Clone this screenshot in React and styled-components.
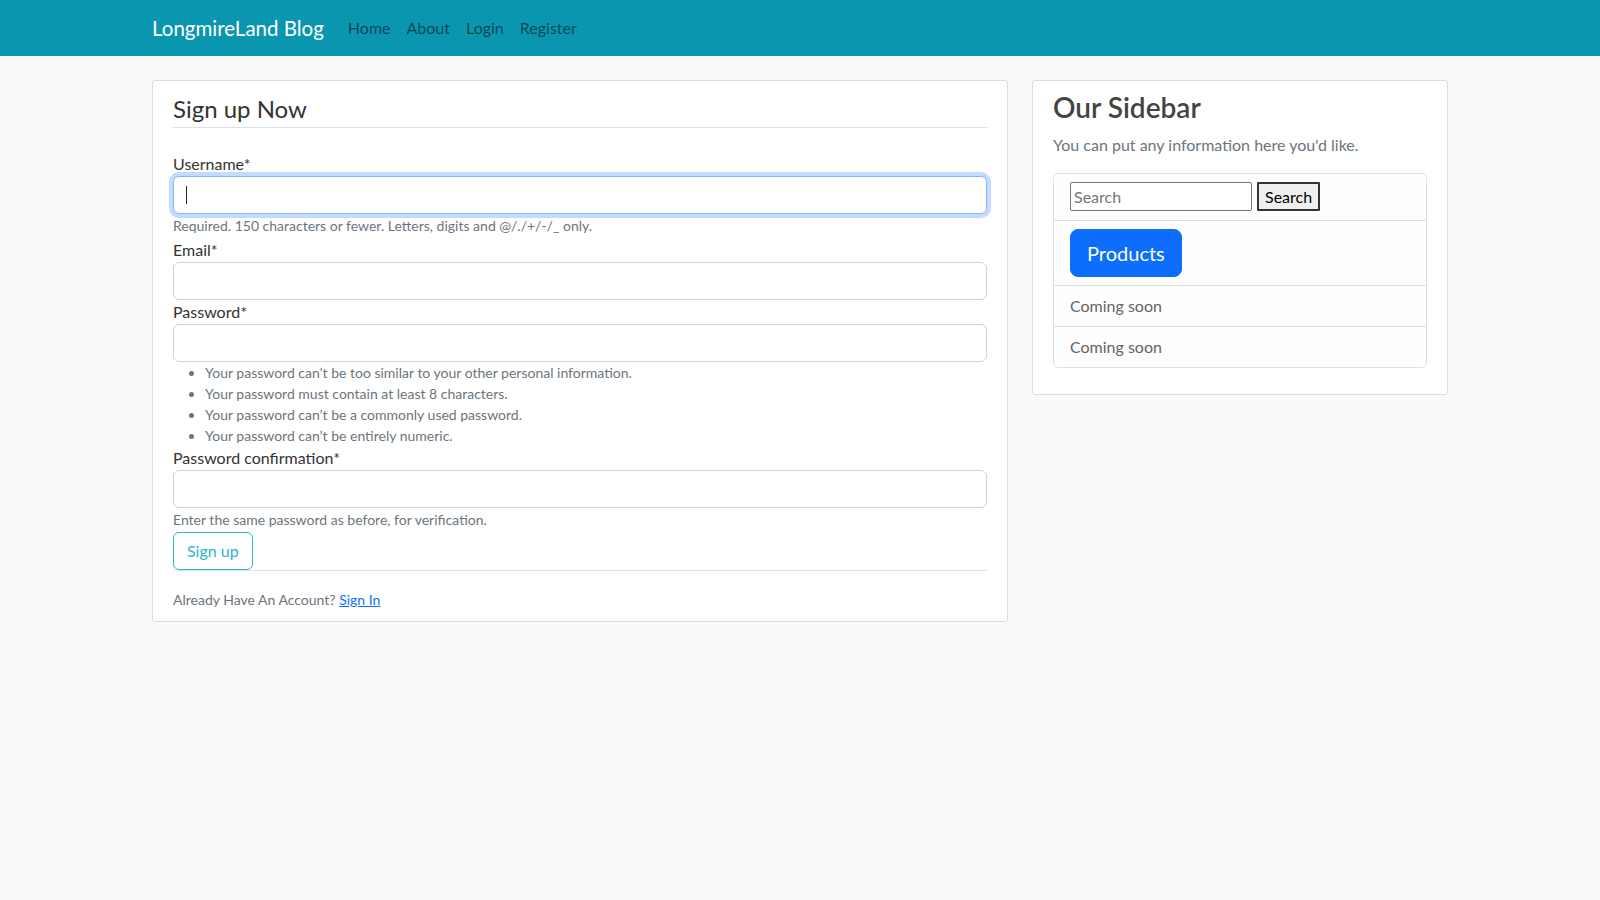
import React from "react";
import styled, { createGlobalStyle } from "styled-components";

const GlobalStyle = createGlobalStyle`
  * {
    box-sizing: border-box;
  }
  body {
    margin: 0;
    background: #fafafa;
    color: #333333;
    font-family: "Segoe UI", Lato, "Noto Sans", sans-serif;
    font-size: 16px;
    line-height: 1.5;
  }
`;

const Header = styled.header`
  background-color: #0b96b0;
  padding: 8px 0;
`;

const NavInner = styled.nav`
  max-width: 1320px;
  margin: 0 auto;
  padding: 0 12px;
  display: flex;
  align-items: center;
`;

const Brand = styled.a`
  color: #ffffff;
  font-size: 20.5px;
  line-height: 30px;
  padding: 5px 0;
  margin-right: 16px;
  text-decoration: none;
`;

const NavLink = styled.a`
  color: rgba(0, 0, 0, 0.55);
  padding: 8px;
  text-decoration: none;
`;

const Container = styled.main`
  max-width: 1320px;
  margin: 24px auto 0;
  padding: 0 12px;
`;

const Row = styled.div`
  display: flex;
  align-items: flex-start;
  margin: 0 -12px;
`;

const Col = styled.div`
  flex: 0 0 ${(p) => p.size};
  max-width: ${(p) => p.size};
  padding: 0 12px;
`;

const ContentSection = styled.section`
  background: #ffffff;
  padding: 10px 20px;
  border: 1px solid #dddddd;
  border-radius: 3px;
  margin-bottom: 20px;
`;

const Legend = styled.div`
  font-size: 24px;
  line-height: 36px;
  border-bottom: 1px solid #dee2e6;
  margin-bottom: 24px;
`;

const Field = styled.div``;

const Label = styled.label`
  display: block;
  line-height: 24px;
`;

const InputWrap = styled.div`
  position: relative;
`;

const Input = styled.input`
  display: block;
  width: 100%;
  height: 38px;
  padding: 6px 12px;
  font: inherit;
  color: #212529;
  background: #ffffff;
  border: 1px solid ${(p) => (p.$focused ? "#86b7fe" : "#ced4da")};
  border-radius: 6px;
  outline: none;
  box-shadow: ${(p) =>
    p.$focused ? "0 0 0 4px rgba(13, 110, 253, 0.25)" : "none"};
`;

const Caret = styled.span`
  position: absolute;
  left: 13px;
  top: 10px;
  width: 1px;
  height: 18px;
  background: #212529;
`;

const HelpText = styled.small`
  display: block;
  font-size: 14px;
  line-height: 24px;
  color: #6c757d;
`;

const HelpList = styled.ul`
  margin: 0;
  padding-left: 32px;
  font-size: 14px;
  line-height: 21px;
  color: #6c757d;
`;

const OutlineButton = styled.button`
  font: inherit;
  line-height: 24px;
  padding: 6px 13px;
  color: #2bb6cb;
  background: transparent;
  border: 1px solid #2bb6cb;
  border-radius: 6px;
  cursor: pointer;
`;

const FormFooter = styled.div`
  border-top: 1px solid #dee2e6;
  padding-top: 16px;
`;

const Muted = styled.small`
  font-size: 14px;
  color: #6c757d;
`;

const Link = styled.a`
  color: #0d6efd;
`;

const SidebarTitle = styled.h3`
  font-size: 28px;
  font-weight: 600;
  line-height: 1.2;
  color: #444444;
  margin: 0 0 8px;
`;

const SidebarText = styled.p`
  color: #6c757d;
  margin: 0 0 16px;
`;

const ListGroup = styled.ul`
  list-style: none;
  margin: 0 0 16px;
  padding: 0;
  border: 1px solid rgba(0, 0, 0, 0.125);
  border-radius: 6px;
  overflow: hidden;
`;

const ListItem = styled.li`
  padding: 8px 16px;
  color: #636464;
  background: #fefefe;
  & + & {
    border-top: 1px solid rgba(0, 0, 0, 0.125);
  }
`;

const SearchForm = styled.form`
  display: flex;
  align-items: center;
  gap: 5px;
  height: 30px;
`;

const SearchInput = styled.input`
  width: 182px;
  height: 29px;
  padding: 1px 3px;
  font: inherit;
  color: #212529;
  border: 1px solid #767676;
  border-radius: 2px;
  &::placeholder {
    color: #757575;
  }
`;

const SearchButton = styled.button`
  height: 29px;
  padding: 0 6px;
  font: inherit;
  line-height: 1;
  color: #000;
  background: #efefef;
  border: 2px solid #333333;
  border-radius: 1px;
`;

const PrimaryButton = styled.button`
  font: inherit;
  font-size: 20px;
  line-height: 30px;
  padding: 8px 16px;
  color: #ffffff;
  background: #0d6efd;
  border: 1px solid #0d6efd;
  border-radius: 8px;
`;

const passwordRules = [
  "Your password can\u2019t be too similar to your other personal information.",
  "Your password must contain at least 8 characters.",
  "Your password can\u2019t be a commonly used password.",
  "Your password can\u2019t be entirely numeric.",
];

const App = () => {
  return (
    <>
      <GlobalStyle />
      <Header>
        <NavInner>
          <Brand href="#">LongmireLand Blog</Brand>
          <NavLink href="#">Home</NavLink>
          <NavLink href="#">About</NavLink>
          <NavLink href="#">Login</NavLink>
          <NavLink href="#">Register</NavLink>
        </NavInner>
      </Header>
      <Container>
        <Row>
          <Col size="66.666667%">
            <ContentSection>
              <form onSubmit={(e) => e.preventDefault()}>
                <Legend>Sign up Now</Legend>
                <Field>
                  <Label>Username*</Label>
                  <InputWrap>
                    <Input type="text" $focused />
                    <Caret />
                  </InputWrap>
                  <HelpText>
                    Required. 150 characters or fewer. Letters, digits and
                    @/./+/-/_ only.
                  </HelpText>
                </Field>
                <Field>
                  <Label>Email*</Label>
                  <Input type="email" />
                </Field>
                <Field>
                  <Label>Password*</Label>
                  <Input type="password" />
                  <HelpList>
                    {passwordRules.map((rule) => (
                      <li key={rule}>{rule}</li>
                    ))}
                  </HelpList>
                </Field>
                <Field>
                  <Label>Password confirmation*</Label>
                  <Input type="password" />
                  <HelpText>
                    Enter the same password as before, for verification.
                  </HelpText>
                </Field>
                <OutlineButton type="submit">Sign up</OutlineButton>
              </form>
              <FormFooter>
                <Muted>
                  Already Have An Account? <Link href="#">Sign In</Link>
                </Muted>
              </FormFooter>
            </ContentSection>
          </Col>
          <Col size="33.333333%">
            <ContentSection>
              <SidebarTitle>Our Sidebar</SidebarTitle>
              <SidebarText>
                You can put any information here you'd like.
              </SidebarText>
              <ListGroup>
                <ListItem>
                  <SearchForm onSubmit={(e) => e.preventDefault()}>
                    <SearchInput type="search" placeholder="Search" />
                    <SearchButton type="submit">Search</SearchButton>
                  </SearchForm>
                </ListItem>
                <ListItem>
                  <PrimaryButton>Products</PrimaryButton>
                </ListItem>
                <ListItem>Coming soon</ListItem>
                <ListItem>Coming soon</ListItem>
              </ListGroup>
            </ContentSection>
          </Col>
        </Row>
      </Container>
    </>
  );
};

export default App;
